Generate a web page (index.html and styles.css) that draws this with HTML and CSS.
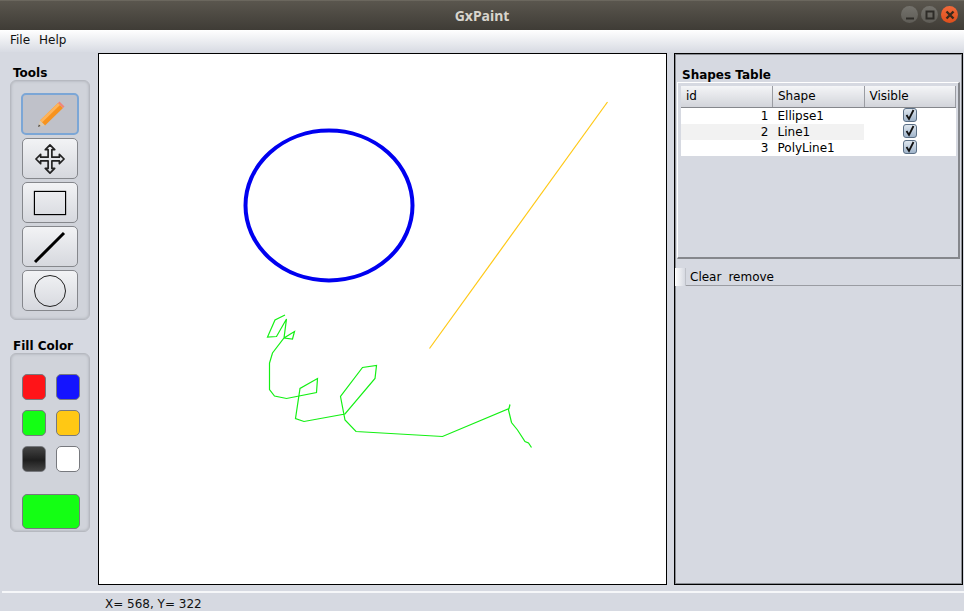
FILE: index.html
```html
<!DOCTYPE html>
<html>
<head>
<meta charset="utf-8">
<title>GxPaint</title>
<link rel="stylesheet" href="styles.css">
</head>
<body>
<!-- window title -->
<div class="TITLEBAR">
  <span class="TITLE">GxPaint</span>
  <div class="WINBTNS">
    <span class="WINBTN"><svg width="16" height="16" viewBox="0 0 16 16"><path d="M4 11.5h8" stroke="#2e2c28" stroke-width="2"/></svg></span>
    <span class="WINBTN"><svg width="16" height="16" viewBox="0 0 16 16"><rect x="4.5" y="4.5" width="7" height="7" fill="none" stroke="#2e2c28" stroke-width="2"/></svg></span>
    <span class="WINBTN CLOSE"><svg width="16" height="16" viewBox="0 0 16 16"><path d="M4.5 4.5l7 7M11.5 4.5l-7 7" stroke="#3a2a1c" stroke-width="2.4"/></svg></span>
  </div>
</div>
<div class="MENUBAR"><span>File</span><span>Help</span></div>

<div class="MAIN">
  <!-- tools column -->
  <div class="SIDE">
    <div class="LABEL TOOLSLABEL">Tools</div>
    <div class="GROUP TOOLS">
      <div class="TOOL ACTIVE">
        <svg width="30" height="30" viewBox="0 0 30 30">
          <path d="M5 21.500L23 4L28 9L10 26.500z" fill="#f7931e"/>
          <path d="M5 21.500L23 4L25 6L7 23.500z" fill="#fdb45c"/>
          <path d="M23 4L24.500 2.500L29.500 7.500L28 9z" fill="#f0857a"/>
          <path d="M3 28L5 21.500L10 26.500z" fill="#d9c8ae"/>
          <path d="M3 28L3.900 25.500L5.500 27z" fill="#444"/>
        </svg>
      </div>
      <div class="TOOL">
        <svg width="30" height="30" viewBox="0 0 32 32">
          <path d="M16 1l5 5h-3v8h8v-3l5 5-5 5v-3h-8v8h3l-5 5-5-5h3v-8H6v3l-5-5 5-5v3h8V6h-3z" fill="none" stroke="#222" stroke-width="1.800" stroke-linejoin="round"/>
        </svg>
      </div>
      <div class="TOOL"><div class="RECTICON"></div></div>
      <div class="TOOL">
        <svg width="34" height="34" viewBox="0 0 34 34"><path d="M2 32L31 3" stroke="#000" stroke-width="3"/></svg>
      </div>
      <div class="TOOL"><div class="CIRCLEICON"></div></div>
    </div>

    <div class="LABEL FILLLABEL">Fill Color</div>
    <div class="GROUP FILLS">
      <div class="SWATCHES">
        <div class="SWATCH RED"></div>
        <div class="SWATCH BLUE"></div>
        <div class="SWATCH GREEN"></div>
        <div class="SWATCH YELLOW"></div>
        <div class="SWATCH BLACK"></div>
        <div class="SWATCH WHITE"></div>
      </div>
      <div class="SWATCH GREEN CURRENT"></div>
    </div>
  </div>

  <!-- drawing area -->
  <div class="CANVAS">
    <svg width="567" height="530" viewBox="99 54 567 530">
      <ellipse cx="329" cy="205.500" rx="83.500" ry="75" fill="none" stroke="#0000f0" stroke-width="4"/>
      <path d="M429.500 348.500L607.500 102" fill="none" stroke="#ffc814" stroke-width="1.200"/>
      <path d="M285 315L275 320L267.500 337L276.500 336.500L286.500 319L284 338L292.500 339L294.500 331.500L284 338L272.500 353L269.500 363L269.500 389.500L274.500 396L286.500 398.500L316.500 392.500L317.500 378.500L300 388.500L295.500 418.500L304 421.500L345 414L375 378.500L376.500 365.500L362.500 367.500L340.500 396.500L345 420L356 431.500L442.500 436.500L509 408.500L510 404.500L508.500 410L511.500 422.500L517.500 430L525 441.500L528.500 443L531.500 447.500" fill="none" stroke="#14f014" stroke-width="1.200"/>
    </svg>
  </div>

  <!-- shapes panel -->
  <div class="PANEL">
    <div class="LABEL TABLELABEL">Shapes Table</div>
    <div class="TABLEBOX">
      <table class="SHAPES">
        <thead>
          <tr><th>id</th><th>Shape</th><th>Visible</th></tr>
        </thead>
        <tbody>
          <tr><td class="NUM">1</td><td>Ellipse1</td><td class="VIS"><span class="CHECK"><svg width="14" height="14" viewBox="0 0 14 14"><path d="M3.500 7l2.500 4L10.500 2" fill="none" stroke="#111" stroke-width="1.800"/></svg></span></td></tr>
          <tr class="ALT"><td class="NUM">2</td><td>Line1</td><td class="VIS"><span class="CHECK"><svg width="14" height="14" viewBox="0 0 14 14"><path d="M3.500 7l2.500 4L10.500 2" fill="none" stroke="#111" stroke-width="1.800"/></svg></span></td></tr>
          <tr><td class="NUM">3</td><td>PolyLine1</td><td class="VIS"><span class="CHECK"><svg width="14" height="14" viewBox="0 0 14 14"><path d="M3.500 7l2.500 4L10.500 2" fill="none" stroke="#111" stroke-width="1.800"/></svg></span></td></tr>
        </tbody>
      </table>
    </div>
    <div class="ACTIONS">
      <span class="GRIP"></span>
      <span>Clear</span>
      <span>remove</span>
    </div>
  </div>
</div>

<div class="STATUS">X= 568, Y= 322</div>
</body>
</html>
```

FILE: styles.css
```css
html, body {
	margin: 0;
	height: 100%;
}
BODY {
	width: 964px;
	height: 611px;
	overflow: hidden;
	display: flex;
	flex-direction: column;
	background-color: #d6d9e1;
	color: #000;
	font-family: "DejaVu Sans", sans-serif;
	font-size: 12px;
}

/* title bar */
.TITLEBAR {
	height: 30px;
	flex: none;
	position: relative;
	display: flex;
	align-items: center;
	justify-content: center;
	background: linear-gradient(#5a564e, #3f3c36);
	border-top: 1px solid #6b675e;
	box-sizing: border-box;
}
.TITLE {
	color: #d8d5cd;
	font-family: "Noto Sans", sans-serif;
	font-weight: bold;
	font-size: 14px;
}
.WINBTNS {
	position: absolute;
	right: 6px;
	top: 5px;
	display: flex;
	gap: 3px;
}
.WINBTN {
	width: 17px;
	height: 17px;
	border-radius: 50%;
	background: linear-gradient(#74726c, #5e5c56);
	display: flex;
	align-items: center;
	justify-content: center;
}
.WINBTN.CLOSE { background: linear-gradient(#f0693a, #dd4f1c); }

/* menu */
.MENUBAR {
	height: 22px;
	flex: none;
	box-sizing: border-box;
	padding: 3px 0 0 10px;
	display: flex;
	gap: 9px;
	background: linear-gradient(#ffffff, #d8dbe3);
	color: #111;
}

.MAIN {
	flex: none;
	height: 533px;
	margin-top: 1px;
	display: flex;
}

/* left column */
.SIDE {
	width: 98px;
	flex: none;
	box-sizing: border-box;
	padding: 12px 0 0 10px;
}
.LABEL {
	font-weight: bold;
	font-size: 12px;
	height: 15px;
	line-height: 15px;
	padding-left: 3px;
}
.TOOLSLABEL { line-height: 17px; }
.FILLLABEL {
	margin-top: 17px;
	line-height: 19px;
}
.GROUP {
	width: 80px;
	box-sizing: border-box;
	background-color: #d0d3da;
	border: 1px solid #b6b9c0;
	border-radius: 6px;
	box-shadow: inset 0 0 3px #a8abb2;
}
.TOOLS {
	height: 240px;
	padding: 13px 0 0 11px;
	display: flex;
	flex-direction: column;
	gap: 3px;
}
.TOOL {
	width: 56px;
	height: 41px;
	box-sizing: border-box;
	border: 1px solid #85878c;
	border-radius: 5px;
	background: linear-gradient(#f2f3f5, #d6d8de);
	display: flex;
	align-items: center;
	justify-content: center;
}
.TOOL.ACTIVE {
	background: #bfc1c9;
	border: 2px solid #7ba6d6;
	margin-top: -1px;
	margin-left: -1px;
	width: 58px;
	height: 42px;
}
.RECTICON {
	width: 32px;
	height: 24px;
	box-sizing: border-box;
	border: 1px solid #000;
	box-shadow: 0 0 1px #000;
}
.CIRCLEICON {
	width: 32px;
	height: 32px;
	box-sizing: border-box;
	border: 1px solid #222;
	border-radius: 50%;
}
.FILLS {
	height: 179px;
	padding: 20px 0 0 11px;
	margin-top: 1px;
}
.SWATCHES {
	display: grid;
	grid-template-columns: 24px 24px;
	grid-auto-rows: 26px;
	column-gap: 10px;
	row-gap: 10px;
}
.SWATCH {
	box-sizing: border-box;
	border: 1px solid #77797e;
	border-radius: 5px;
}
.RED { background: #ff1418; }
.BLUE { background: #1414ff; }
.GREEN { background: #14ff14; }
.YELLOW { background: #ffc814; }
.BLACK { background: linear-gradient(#444, #1e1e1e 55%, #444); }
.WHITE { background: #fff; }
.CURRENT {
	width: 58px;
	height: 35px;
	margin-top: 22px;
}

/* canvas */
.CANVAS {
	width: 569px;
	height: 532px;
	flex: none;
	box-sizing: border-box;
	background: #fff;
	border: 1px solid #000;
}
.CANVAS svg { display: block; }

/* right panel */
.PANEL {
	width: 289px;
	height: 532px;
	flex: none;
	margin-left: 7px;
	box-sizing: border-box;
	border: 1px solid #000;
	box-shadow: inset 1px 1px 0 #8a8d93, inset -1px -1px 0 #8a8d93;
}
.TABLELABEL {
	padding: 13px 0 0 7px;
	height: 15px;
	line-height: 17px;
}
.TABLEBOX {
	width: 283px;
	height: 177px;
	box-sizing: border-box;
	margin-left: 2px;
	padding: 3px 3px 0 3px;
	border-top: 1px solid #fff;
	border-left: 1px solid #fff;
	border-right: 2px solid #85878c;
	border-bottom: 2px solid #85878c;
}
.SHAPES {
	width: 275px;
	border-collapse: collapse;
	table-layout: fixed;
}
.SHAPES th {
	height: 21px;
	padding: 0 0 0 5px;
	box-sizing: border-box;
	text-align: left;
	font-weight: normal;
	border-right: 1px solid #9a9ca2;
	border-bottom: 1px solid #85878c;
	background: linear-gradient(#f4f5f7, #d2d4da);
}
.SHAPES td {
	height: 16px;
	box-sizing: border-box;
	padding: 0 0 0 5px;
	background: #fff;
	line-height: 16px;
}
.SHAPES tr.ALT td { background: #f2f2f2; }
.SHAPES tr.ALT td.VIS { background: #fff; }
.SHAPES td.NUM {
	text-align: right;
	padding-right: 4px;
}
.SHAPES td.VIS {
	padding: 0 0 1px 0;
}
.CHECK {
	display: block;
	width: 14px;
	height: 14px;
	margin: 0 auto;
	box-sizing: border-box;
	border: 1px solid #5b6f85;
	border-radius: 3px;
	background: linear-gradient(#dfe7ef, #a0b4ca);
}
.CHECK svg {
	display: block;
	margin: -1px;
}
.ACTIONS {
	margin-top: 8px;
	height: 19px;
	box-sizing: border-box;
	display: flex;
	align-items: center;
	gap: 7px;
	border-bottom: 1px solid #9a9ca2;
	padding-top: 1px;
}
.GRIP {
	width: 10px;
	height: 18px;
	margin-right: -3px;
	background: linear-gradient(90deg, #fff, #d6d9e1);
	border-right: 1px solid #bfc2c9;
}

/* status bar */
.STATUS {
	margin-top: 5px;
	flex: none;
	height: 20px;
	box-sizing: border-box;
	border-top: 2px solid #f6f7f9;
	margin-left: 2px;
	padding: 4px 0 0 103px;
	line-height: 15px;
	color: #111;
}
```
